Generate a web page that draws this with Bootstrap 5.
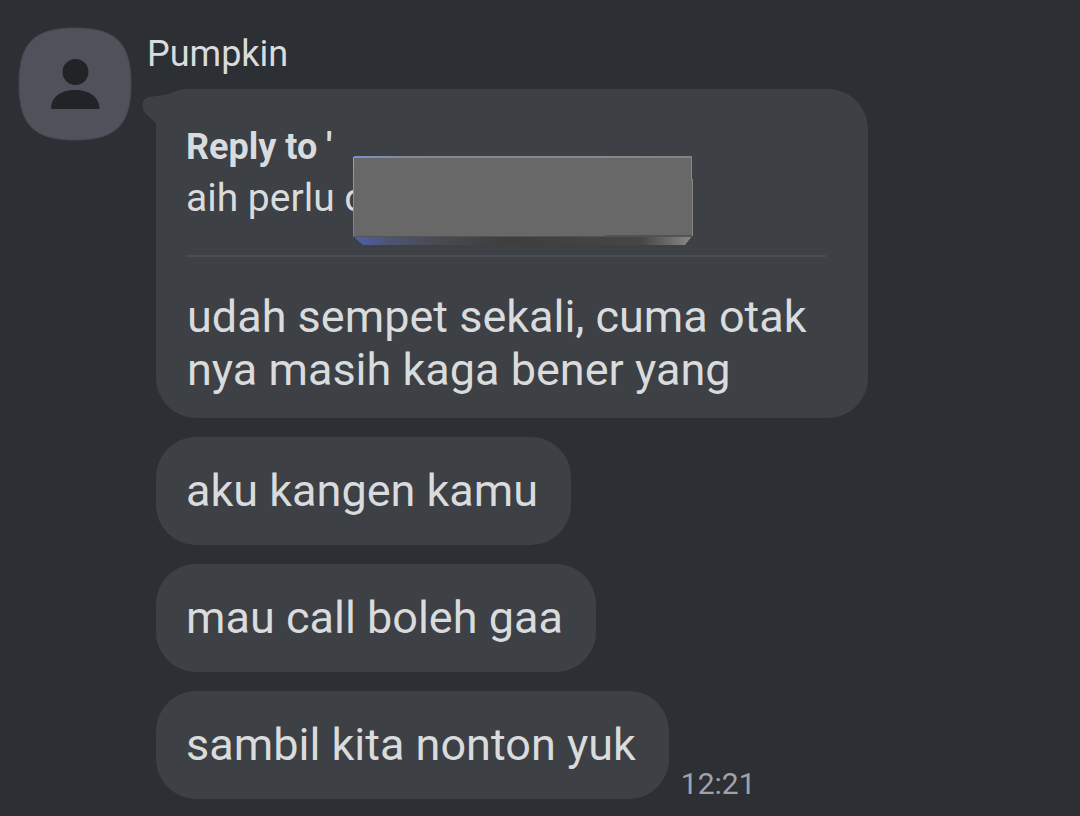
<!DOCTYPE html>
<html lang="id">
<head>
<meta charset="utf-8">
<meta name="viewport" content="width=device-width, initial-scale=1">
<title>Pumpkin</title>
<link href="https://cdn.jsdelivr.net/npm/bootstrap@5.3.0/dist/css/bootstrap.min.css" rel="stylesheet">
<style>
body { background: #2c2f34; color: #d9dbdd; font-family: Roboto, "Liberation Sans", sans-serif; }
.chat { padding: 27px 18px 17px; gap: 15px; }
.avatar { width: 114px; height: 114px; }
.sender { font-size: 36px; line-height: 54px; margin-bottom: 8px; }
.stack { gap: 19px; padding-left: 9px; }
.bubble { background: #3d4045; border-radius: 40px; padding: 27px 33px 28px 30px; font-size: 45px; line-height: 53px; max-width: 712px; }
.bubble.reply { padding: 32px 42px 22px 30px; }
.reply-text { padding-left: 1px; }
.tail { left: -14px; top: 0; width: 56px; height: 48px; }
.quote { font-size: 39px; line-height: 51px; border-bottom: 2px solid #494c51; padding-bottom: 31px; margin-bottom: 33px; }
.quote strong { font-size: 36px; }
.cover { left: 197px; top: 66px; width: 340px; height: 91px; }
.stamp { font-size: 30px; line-height: 30px; color: #a0a4a8; margin-left: 12px; }
</style>
</head>
<body>
<main class="chat d-flex align-items-start">
  <svg class="avatar flex-shrink-0" viewBox="0 0 114 114" role="img" aria-label="Pumpkin">
    <path d="M57 1C98 1 113 16 113 57S98 113 57 113 1 98 1 57 16 1 57 1Z" fill="#4f525a" stroke="#464951"/>
    <circle cx="57.500" cy="45" r="13" fill="#212327"/>
    <path d="M33 82C33 70 43 63 57 63S81.500 70 81.500 82Z" fill="#212327"/>
  </svg>
  <section class="flex-grow-1">
    <div class="sender">Pumpkin</div>
    <div class="stack d-flex flex-column align-items-start">
      <article class="bubble reply position-relative w-100">
        <svg class="tail position-absolute" viewBox="0 0 56 48" aria-hidden="true">
          <path d="M56 0H42C34 1 30 5 22 6L7 8C0 9-1 19 3 24L14 34V48H56Z" fill="#3d4045"/>
        </svg>
        <div class="quote position-relative"><strong>Reply to '</strong><br>aih perlu d</div>
        <svg class="cover position-absolute" viewBox="0 0 340 91" aria-hidden="true">
          <defs>
            <linearGradient id="edge"><stop stop-color="#7e91d0"/><stop offset=".16" stop-color="#858993"/><stop offset="1" stop-color="#858585"/></linearGradient>
            <linearGradient id="under"><stop stop-color="#4c61aa"/><stop offset=".1" stop-color="#4d5474"/><stop offset=".25" stop-color="#494a50"/><stop offset=".45" stop-color="#3e3e3f"/><stop offset=".85" stop-color="#464646"/><stop offset=".96" stop-color="#777"/><stop offset="1" stop-color="#8a8a8a"/></linearGradient>
            <linearGradient id="side" x2="0" y2="1"><stop stop-color="#8a9dd5"/><stop offset="1" stop-color="#657bc0"/></linearGradient>
          </defs>
          <path d="M2 81H339L332 90H10L2 83Z" fill="url(#under)"/>
          <path d="M1 1H339V24H340V81H1Z" fill="#686868"/>
          <path d="M1 1H339V3H1Z" fill="url(#edge)"/>
          <path d="M0 2H1V82H0Z" fill="url(#side)"/>
          <path d="M338 2H339V24H340V81H339V25H338Z" fill="#858686"/>
          <path d="M1 81H252V80H339V82H1Z" fill="#525354"/>
        </svg>
        <div class="reply-text">udah sempet sekali, cuma otak nya masih kaga bener yang</div>
      </article>
      <article class="bubble">aku kangen kamu</article>
      <article class="bubble">mau call boleh gaa</article>
      <div class="d-flex align-items-end">
        <article class="bubble">sambil kita nonton yuk</article>
        <time class="stamp">12:21</time>
      </div>
    </div>
  </section>
</main>
<script src="https://cdn.jsdelivr.net/npm/bootstrap@5.3.0/dist/js/bootstrap.bundle.min.js"></script>
</body>
</html>
